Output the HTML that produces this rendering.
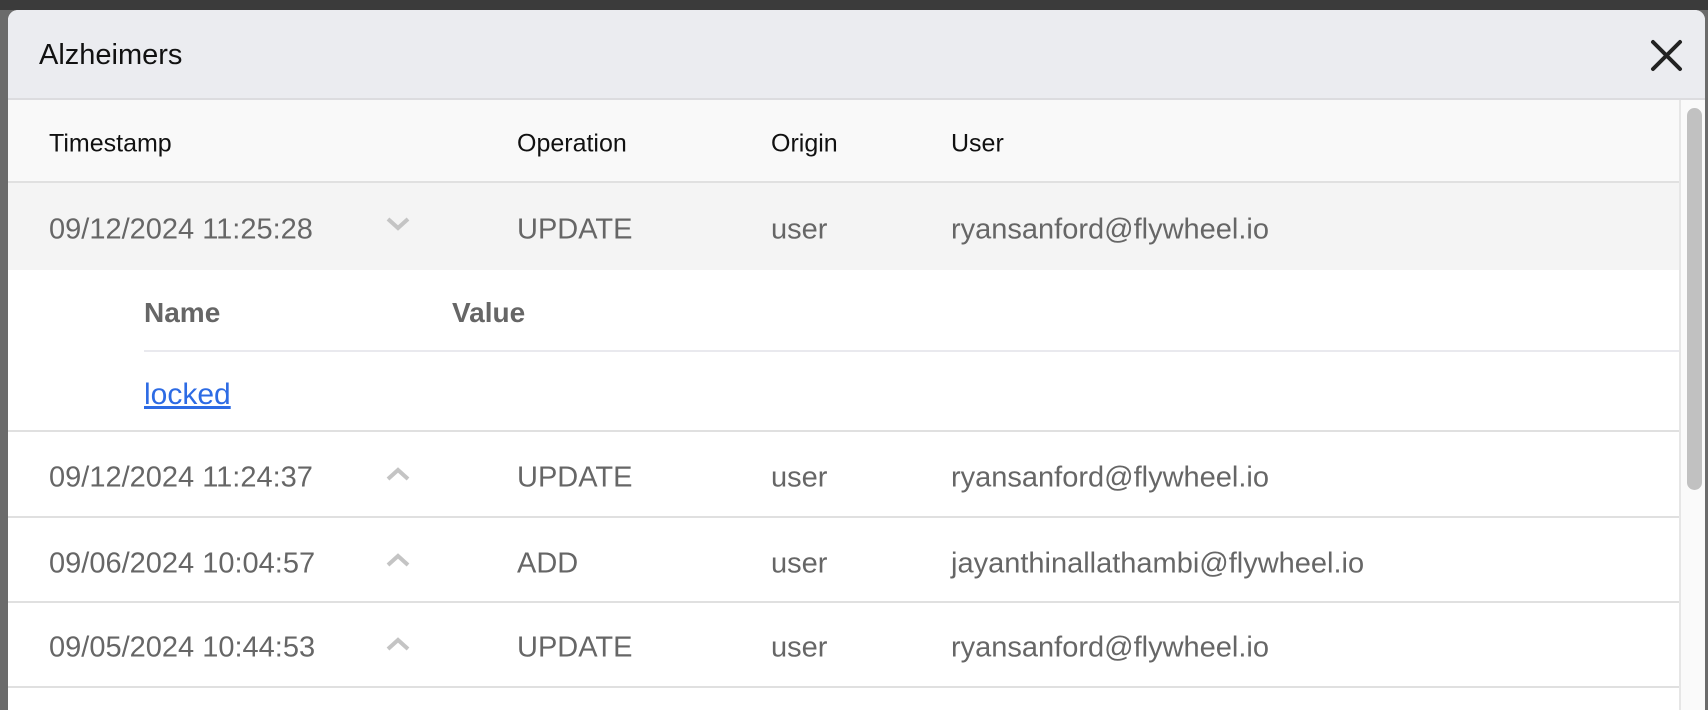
<!DOCTYPE html>
<html><head><meta charset="utf-8"><style>
*{box-sizing:border-box;margin:0;padding:0}
body{width:1708px;height:698px;overflow:hidden;background:#6b6b6b;font-family:"Liberation Sans",sans-serif;position:relative}
.top{position:absolute;left:0;top:0;width:1708px;height:10px;background:#3b3b3b}
.modal{position:absolute;left:8px;top:10px;width:1697px;height:700px;background:#fff;border-radius:10px 10px 0 0;overflow:hidden}
.hdr{height:90px;background:#ebecf0;border-bottom:2px solid #dcdcdf;position:relative}
.hdr .t{position:absolute;left:31px;top:29px;font-size:29px;color:#111}
.x{position:absolute;right:22px;top:29px}
.body{position:absolute;left:0;top:90px;width:1671px;height:610px}
.row{position:absolute;left:0;width:1671px;border-bottom:2px solid #e0e0e0}
.c{position:absolute;font-size:29px;color:#666;white-space:nowrap;transform:translateY(-50%);margin-top:2px}
.h .c{font-size:25px;color:#111}
.sb{position:absolute;right:0;top:90px;width:26px;height:610px;background:#fafafa;border-left:2px solid #e6e6e6}
.sb div{position:absolute;left:6px;top:8px;width:15px;height:382px;border-radius:8px;background:#c1c1c1}
.chev{position:absolute;left:377px}
</style></head><body>
<div class="top"></div>
<div class="modal">
 <div class="hdr"><div class="t">Alzheimers</div>
  <svg class="x" width="33" height="33" viewBox="0 0 33 33"><path d="M3 3L30 30M30 3L3 30" stroke="#222" stroke-width="4" stroke-linecap="round"/></svg></div>
 <div class="body">
  <div class="row h" style="top:0;height:83px;background:#f9f9f9">
   <div class="c" style="left:41px;top:42px">Timestamp</div>
   <div class="c" style="left:509px;top:42px">Operation</div>
   <div class="c" style="left:763px;top:42px">Origin</div>
   <div class="c" style="left:943px;top:42px">User</div>
  </div>
  <div class="row" style="top:83px;height:87px;background:#f4f4f4;border-bottom:none">
   <div class="c" style="left:41px;top:45px">09/12/2024 11:25:28</div>
   <svg class="chev" style="top:33px" width="26" height="16" viewBox="0 0 26 16"><path d="M3 3L13 12L23 3" stroke="#c4c4c4" stroke-width="4" fill="none"/></svg>
   <div class="c" style="left:509px;top:45px">UPDATE</div>
   <div class="c" style="left:763px;top:45px">user</div>
   <div class="c" style="left:943px;top:45px">ryansanford@flywheel.io</div>
  </div>
  <div class="row" style="top:170px;height:162px;background:#fff">
   <div class="c" style="left:136px;top:41px;font-weight:bold;font-size:28px">Name</div>
   <div class="c" style="left:444px;top:41px;font-weight:bold;font-size:28px">Value</div>
   <div style="position:absolute;left:136px;top:80px;width:1535px;height:2px;background:#e9e9ee"></div>
   <div class="c" style="left:136px;top:123px;font-size:30px;color:#2d6be4;text-decoration:underline">locked</div>
  </div>
  <div class="row" style="top:332px;height:86px">
   <div class="c" style="left:41px;top:44px">09/12/2024 11:24:37</div>
   <svg class="chev" style="top:34px" width="26" height="16" viewBox="0 0 26 16"><path d="M3 13L13 4L23 13" stroke="#c4c4c4" stroke-width="4" fill="none"/></svg>
   <div class="c" style="left:509px;top:44px">UPDATE</div>
   <div class="c" style="left:763px;top:44px">user</div>
   <div class="c" style="left:943px;top:44px">ryansanford@flywheel.io</div>
  </div>
  <div class="row" style="top:418px;height:85px">
   <div class="c" style="left:41px;top:44px">09/06/2024 10:04:57</div>
   <svg class="chev" style="top:34px" width="26" height="16" viewBox="0 0 26 16"><path d="M3 13L13 4L23 13" stroke="#c4c4c4" stroke-width="4" fill="none"/></svg>
   <div class="c" style="left:509px;top:44px">ADD</div>
   <div class="c" style="left:763px;top:44px">user</div>
   <div class="c" style="left:943px;top:44px">jayanthinallathambi@flywheel.io</div>
  </div>
  <div class="row" style="top:503px;height:85px">
   <div class="c" style="left:41px;top:43px">09/05/2024 10:44:53</div>
   <svg class="chev" style="top:33px" width="26" height="16" viewBox="0 0 26 16"><path d="M3 13L13 4L23 13" stroke="#c4c4c4" stroke-width="4" fill="none"/></svg>
   <div class="c" style="left:509px;top:43px">UPDATE</div>
   <div class="c" style="left:763px;top:43px">user</div>
   <div class="c" style="left:943px;top:43px">ryansanford@flywheel.io</div>
  </div>
 </div>
 <div class="sb"><div></div></div>
</div>
</body></html>
